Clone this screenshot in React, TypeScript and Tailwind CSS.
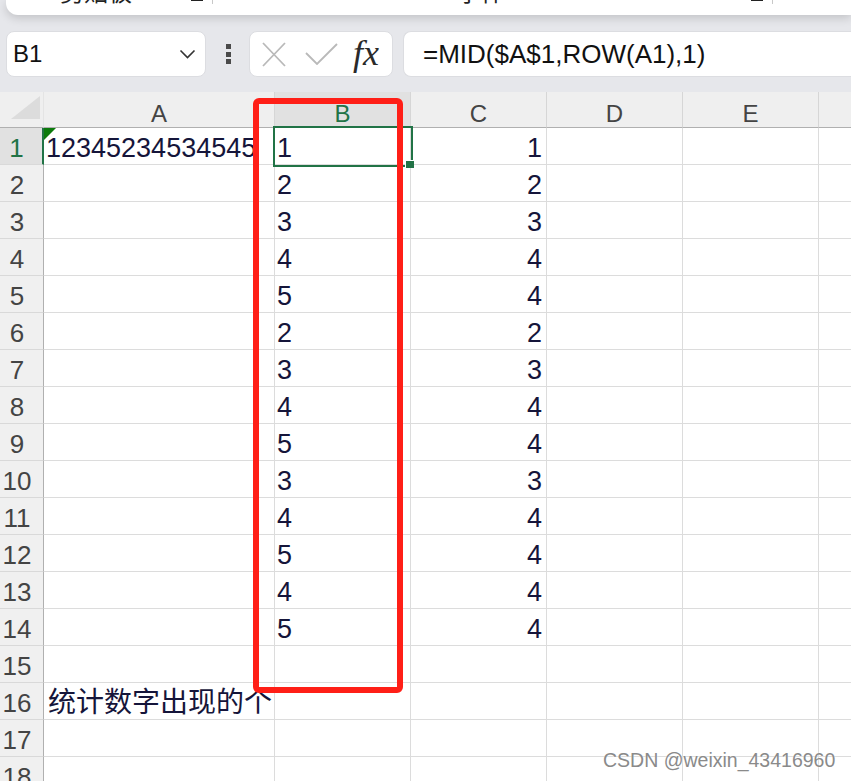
import React from "react";

const colW = [44, 231, 136, 136, 136, 136, 136];
const letters = ["", "A", "B", "C", "D", "E", "F"];
const bVals = [1, 2, 3, 4, 5, 2, 3, 4, 5, 3, 4, 5, 4, 5];
const cVals = [1, 2, 3, 4, 4, 2, 3, 4, 4, 3, 4, 4, 4, 4];

function Launcher() {
  return (
    <svg width="12" height="6" viewBox="0 0 12 6" className="block">
      <path d="M1 0 V3 H11 V0" stroke="#222" strokeWidth="2" fill="none" />
    </svg>
  );
}

function Ribbon() {
  return (
    <div className="ml-[6px] h-[15px] bg-white rounded-bl-[12px] shadow-[0_3px_10px_rgba(0,0,0,0.16)] flex items-start overflow-hidden">
      <div className="shrink-0 ml-[54px] w-[74px] -mt-[21px] text-[24px] leading-[24px] text-[#222] font-['Noto_Sans_CJK_SC',sans-serif]">剪贴板</div>
      <div className="shrink-0 ml-[57px] -mt-[3px]"><Launcher /></div>
      <div className="shrink-0 ml-[9px] w-px h-[4px] bg-[#c8c8c8]" />
      <div className="shrink-0 ml-[244px] w-[48px] -mt-[21px] text-[24px] leading-[24px] text-[#222] font-['Noto_Sans_CJK_SC',sans-serif]">字体</div>
      <div className="shrink-0 ml-[246px] -mt-[3px]"><Launcher /></div>
      <div className="shrink-0 ml-[9px] w-px h-[4px] bg-[#c8c8c8]" />
    </div>
  );
}

function FormulaBar() {
  return (
    <div className="mt-[16px] h-[46px] flex items-stretch">
      <div className="shrink-0 ml-[6px] w-[200px] bg-white rounded-[8px] border border-[#dcdde1] flex items-center justify-between pl-[6px] pr-[9px]">
        <span className="text-[24px] text-[#111]">B1</span>
        <svg width="17" height="10" viewBox="0 0 17 10">
          <path d="M1.5 1.5 L8.5 8.5 L15.5 1.5" stroke="#333" strokeWidth="1.6" fill="none" />
        </svg>
      </div>
      <div className="shrink-0 ml-[20px] w-[5px] flex flex-col justify-center gap-[2.5px]">
        <div className="w-[5px] h-[5px] bg-[#4a4a4a]" />
        <div className="w-[5px] h-[5px] bg-[#4a4a4a]" />
        <div className="w-[5px] h-[5px] bg-[#4a4a4a]" />
      </div>
      <div className="shrink-0 ml-[18px] w-[144px] bg-white rounded-[8px] border border-[#dcdde1] flex items-center">
        <svg width="24" height="25" viewBox="0 0 24 25" className="shrink-0 ml-[12px]">
          <path d="M1 1 L23 24 M23 1 L1 24" stroke="#b9b9b9" strokeWidth="1.8" fill="none" />
        </svg>
        <svg width="33" height="22" viewBox="0 0 33 22" className="shrink-0 ml-[19px]">
          <path d="M1 10 L12 21 L32 1" stroke="#b9b9b9" strokeWidth="1.8" fill="none" />
        </svg>
        <span className="ml-[15px] -mt-[2px] text-[36px] leading-none italic text-[#2a2a2a] font-['Liberation_Serif',serif]">
          fx
        </span>
      </div>
      <div className="shrink-0 ml-[10px] w-[470px] bg-white rounded-l-[8px] border border-r-0 border-[#dcdde1] flex items-center pl-[19px]">
        <span className="text-[26px] text-[#111]">=MID($A$1,ROW(A1),1)</span>
      </div>
    </div>
  );
}

function Corner() {
  return (
    <div className="h-full w-full flex items-end justify-end pr-[3px] pb-[8px]">
      <svg width="29" height="23" viewBox="0 0 29 23">
        <polygon points="0,23 29,0 29,23" fill="#dcdcdc" />
      </svg>
    </div>
  );
}

function HeaderRow() {
  return (
    <div className="flex h-[36px]">
      {colW.map((w, i) => {
        const sel = i === 2;
        return (
          <div
            key={i}
            style={{ width: w, minWidth: w }}
            className={
              "h-full border-b border-[#b0b0b0] flex items-center justify-center pt-[8px] text-[24px] " +
              (i === 0
                ? "border-r border-r-[#e4e4e4] bg-[#efefef] pt-0"
                : sel
                ? "border-r border-r-[#d6d6d6] bg-[#e1e1e1] text-[#217346]"
                : "border-r border-r-[#d6d6d6] bg-[#efefef] text-[#444]")
            }
          >
            {i === 0 ? <Corner /> : letters[i]}
          </div>
        );
      })}
    </div>
  );
}

function BodyRow({ n }: { n: number }) {
  const sel = n === 1;
  const bv = n <= 14 ? bVals[n - 1] : null;
  const cv = n <= 14 ? cVals[n - 1] : null;
  return (
    <div className="flex h-[37px]">
      <div
        style={{ width: colW[0], minWidth: colW[0] }}
        className={
          "h-full border-b border-[#d9d9d9] flex items-center justify-center pt-[4px] pr-[9px] text-[26px] " +
          (sel
            ? "bg-[#e1e1e1] text-[#217346] border-r-2 border-r-[#217346]"
            : "bg-[#f0f0f0] text-[#444] border-r border-r-[#b0b0b0]")
        }
      >
        {n}
      </div>
      <div
        style={{ width: colW[1], minWidth: colW[1] }}
        className="relative h-full bg-white border-r border-b border-[#dcdcdc] flex items-center pt-[4px] pl-[2px] text-[27px] text-[#15153a] whitespace-nowrap overflow-visible z-10"
      >
        {n === 1 && (
          <svg width="12" height="12" viewBox="0 0 12 12" className="absolute left-0 top-0">
            <polygon points="0,0 12,0 0,12" fill="#0b7a0b" />
          </svg>
        )}
        {n === 1 && "12345234534545"}
        {n === 16 && <span className="text-[28px] pl-[2px]">统计数字出现的个</span>}
      </div>
      <div
        style={{ width: colW[2], minWidth: colW[2] }}
        className="h-full bg-white border-r border-b border-[#dcdcdc] flex items-center pt-[4px] pl-[2px] text-[27px] text-[#15153a] z-20"
      >
        {bv}
      </div>
      <div
        style={{ width: colW[3], minWidth: colW[3] }}
        className="h-full bg-white border-r border-b border-[#dcdcdc] flex items-center justify-end pt-[4px] pr-[4px] text-[27px] text-[#15153a]"
      >
        {cv}
      </div>
      {[4, 5, 6].map((i) => (
        <div
          key={i}
          style={{ width: colW[i], minWidth: colW[i] }}
          className="h-full bg-white border-r border-b border-[#dcdcdc]"
        />
      ))}
    </div>
  );
}

export default function App() {
  const rows = Array.from({ length: 18 }, (_, i) => i + 1);
  return (
    <div className="relative w-[851px] h-[781px] overflow-hidden bg-[#e6e7eb] font-['Liberation_Sans','Noto_Sans_CJK_SC',sans-serif]">
      <Ribbon />
      <FormulaBar />
      <div className="mt-[15px] overflow-hidden">
        <HeaderRow />
        {rows.map((n) => (
          <BodyRow key={n} n={n} />
        ))}
      </div>

      {/* selection box */}
      <div className="absolute left-[273px] top-[126px] w-[140px] h-[41px] border-2 border-[#217346] z-30 pointer-events-none" />
      <div className="absolute left-[405px] top-[160px] w-[9px] h-[8px] bg-[#217346] border-l border-t border-white z-30" />

      {/* red annotation */}
      <div className="absolute left-[253px] top-[98px] w-[150px] h-[595px] border-[6px] border-[#ff1f17] rounded-[6px] z-40 pointer-events-none" />

      {/* watermark */}
      <div className="absolute left-[603px] top-[751px] text-[19.5px] leading-none text-[#8a8a8a] z-50 [text-shadow:0_0_2px_rgba(255,255,255,0.9)]">
        CSDN @weixin_43416960
      </div>
    </div>
  );
}
